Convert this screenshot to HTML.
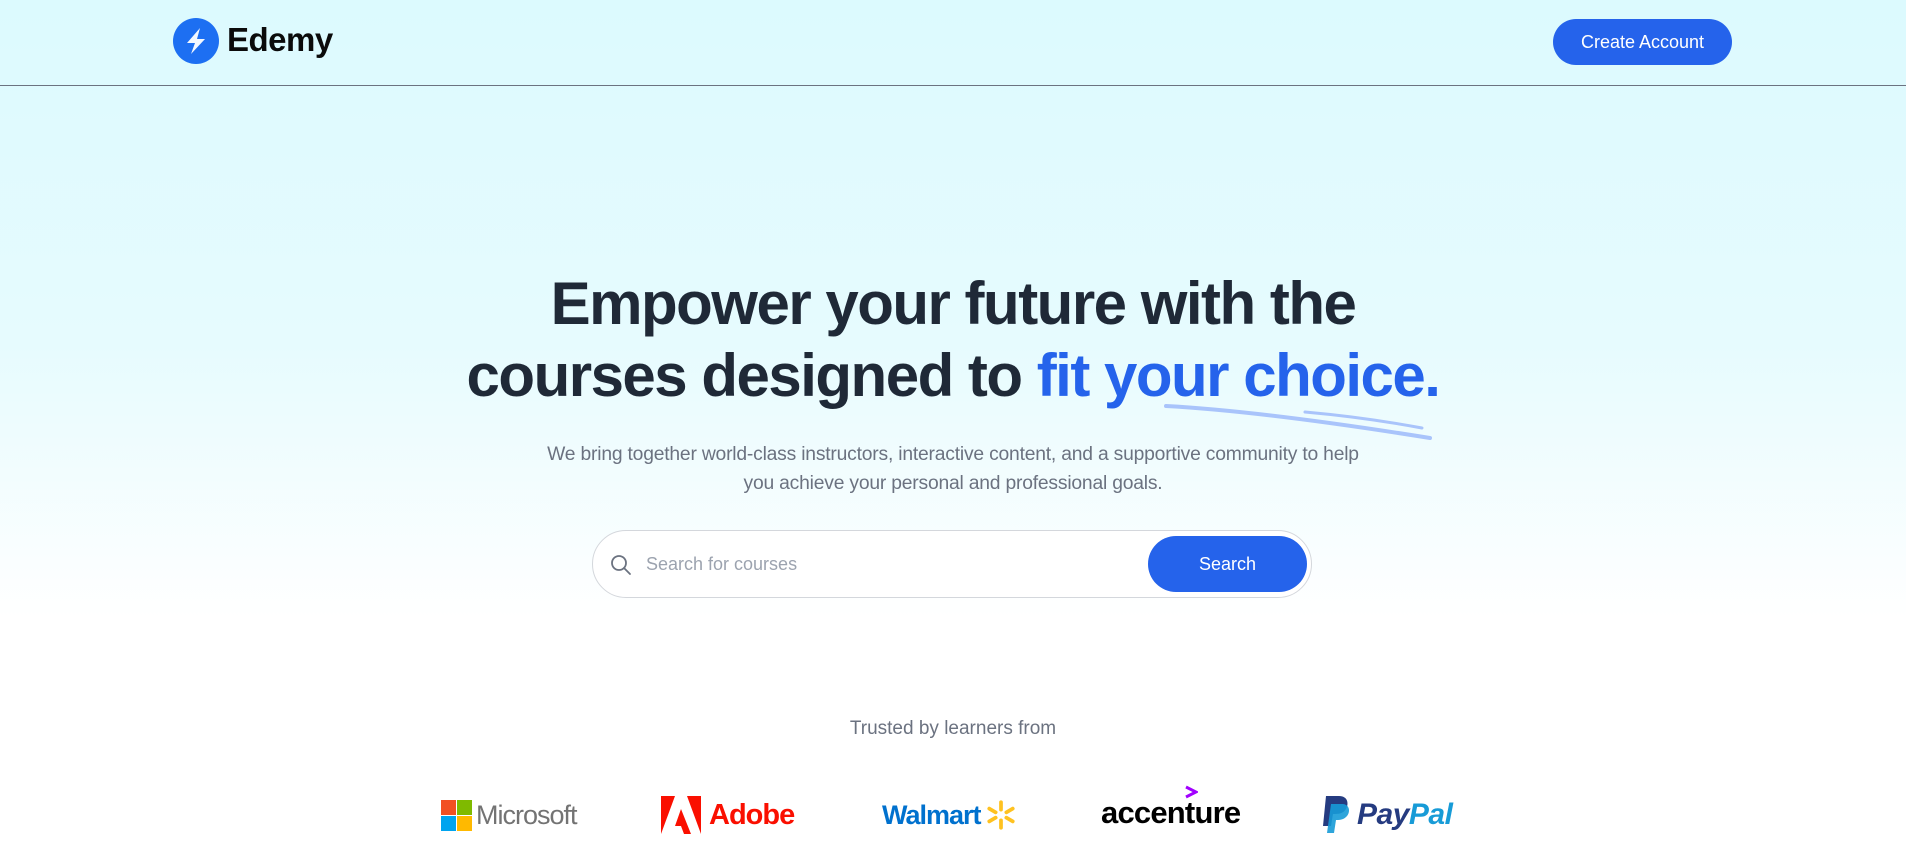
<!DOCTYPE html>
<html><head><meta charset="utf-8"><style>
*{margin:0;padding:0;box-sizing:border-box}
body{width:1906px;height:858px;overflow:hidden;font-family:"Liberation Sans",sans-serif;background:linear-gradient(180deg,#dcfafe 0%,#e6fbfe 40%,#ffffff 72%,#fff 100%);position:relative}
.hdr{position:absolute;left:0;top:0;width:1906px;height:86px;border-bottom:1px solid #6b7280}
.logo{position:absolute;left:173px;top:18px;width:46px;height:46px;border-radius:50%;background:#1d6ff2}
.brand{position:absolute;left:227px;top:21px;font-size:33px;font-weight:bold;color:#0b0b0b;letter-spacing:-0.5px}
.btn{position:absolute;left:1553px;top:19px;width:179px;height:46px;border-radius:23px;background:#2563eb;color:#fff;font-size:18px;text-align:center;line-height:46px}
h1{position:absolute;left:0;width:1906px;top:268px;text-align:center;font-size:60px;line-height:72px;color:#1f2937;letter-spacing:-1.5px;font-weight:bold}
h1 span{color:#2563eb}
.p{position:absolute;left:0;width:1906px;top:440px;text-align:center;font-size:19.3px;line-height:29px;color:#6b7280;letter-spacing:-0.2px}
.sb{position:absolute;left:592px;top:530px;width:720px;height:68px;border:1px solid #d4d7dc;border-radius:34px;background:#fff}
.sb .ph{position:absolute;left:53px;top:0;line-height:66px;font-size:18px;color:#9ca3af}
.sb .go{position:absolute;left:555px;top:5px;width:159px;height:56px;border-radius:28px;background:#2563eb;color:#fff;font-size:18px;text-align:center;line-height:56px}
.tr{position:absolute;left:0;width:1906px;top:718px;text-align:center;font-size:19px;color:#6b7280}
.lg{position:absolute;top:795px;height:40px;display:flex;align-items:center;font-weight:bold}
</style></head><body>
<div class="hdr">
<div class="logo"><svg width="46" height="46" viewBox="0 0 46 46"><path d="M27 10 L14 25 L22 25 L18 36 L32 21 L24 21 Z" fill="#fff" opacity="0.95"/></svg></div>
<div class="brand">Edemy</div>
<div class="btn">Create Account</div>
</div>
<h1>Empower your future with the<br>courses designed to <span>fit your choice.</span></h1>
<svg style="position:absolute;left:1160px;top:398px" width="280" height="46" viewBox="0 0 280 46"><path d="M6 8 C80 12 170 24 270 40" stroke="#a9c4fb" stroke-width="4" fill="none" stroke-linecap="round"/><path d="M145 14 C190 18 230 24 262 30" stroke="#a9c4fb" stroke-width="3" fill="none" stroke-linecap="round"/></svg>
<div class="p">We bring together world-class instructors, interactive content, and a supportive community to help<br>you achieve your personal and professional goals.</div>
<div class="sb"><svg style="position:absolute;left:16px;top:22px" width="24" height="24" viewBox="0 0 24 24"><circle cx="10" cy="10" r="7" stroke="#6b7280" stroke-width="1.8" fill="none"/><path d="M15 15 L21 21" stroke="#6b7280" stroke-width="1.8" stroke-linecap="round"/></svg><div class="ph">Search for courses</div><div class="go">Search</div></div>
<div class="tr">Trusted by learners from</div>
<div class="lg" style="left:441px"><svg width="31" height="31" viewBox="0 0 31 31"><rect width="15" height="15" fill="#f25022"/><rect x="16" width="15" height="15" fill="#7fba00"/><rect y="16" width="15" height="15" fill="#00a4ef"/><rect x="16" y="16" width="15" height="15" fill="#ffb900"/></svg><span style="font-weight:normal;color:#737373;font-size:27px;margin-left:4px;letter-spacing:-1px">Microsoft</span></div>
<div class="lg" style="left:661px"><svg width="40" height="38" viewBox="0 0 40 38"><path d="M0 0 H14 L0 38 Z M26 0 H40 V38 Z M20 13 L30 38 H23 L20 30 H14 Z" fill="#fa0f00"/></svg><span style="color:#fa0f00;font-size:29px;margin-left:8px;letter-spacing:-1px">Adobe</span></div>
<div class="lg" style="left:882px"><span style="color:#0071ce;font-size:27px;letter-spacing:-1px">Walmart</span><svg width="32" height="32" viewBox="0 0 30 30" style="margin-left:4px"><g stroke="#ffc220" stroke-width="3.5" stroke-linecap="round"><path d="M15 3v7M15 20v7M4 9l6 3.5M20 17.5l6 3.5M4 21l6-3.5M20 12.5l6-3.5"/></g></svg></div>
<div class="lg" style="left:1101px;top:793px"><span style="color:#000;font-size:31px;letter-spacing:-0.8px;position:relative">accen<span style="position:relative">t<svg style="position:absolute;left:-1px;top:-10px" width="14" height="14" viewBox="0 0 14 14"><path d="M2 2 L12 7 L2 12" stroke="#a100ff" stroke-width="3" fill="none"/></svg></span>ure</span></div>
<div class="lg" style="left:1321px"><svg width="30" height="38" viewBox="0 0 30 38"><path d="M5 0 H18 C27 0 28 8 25 13 C22 18 17 18 12 18 L10 30 H2 Z" fill="#253b80"/><path d="M10 8 H22 C30 9 29 18 25 21 C22 24 18 24 15 24 L13 37 H6 Z" fill="#179bd7" opacity="0.9"/></svg><span style="color:#253b80;font-size:30px;font-style:italic;margin-left:6px;letter-spacing:-0.5px">Pay<span style="color:#179bd7">Pal</span></span></div>
</body></html>
